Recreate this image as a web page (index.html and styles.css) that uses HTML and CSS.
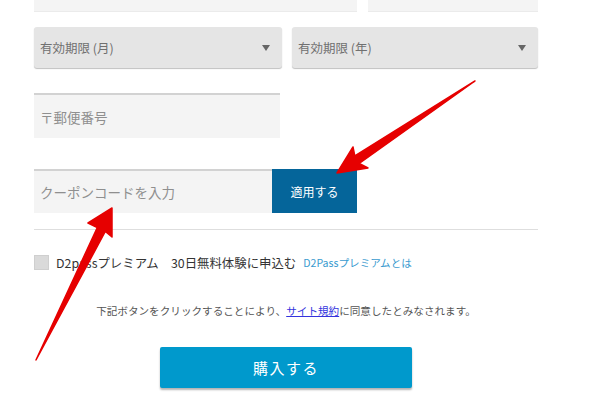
FILE: index.html
```html
<!DOCTYPE html>
<html lang="ja">
<head>
<meta charset="utf-8">
<link rel="stylesheet" href="styles.css">
</head>
<body>
<div class="page">
  <div class="row-top">
    <div class="field"></div>
    <div class="field"></div>
  </div>
  <div class="row-selects">
    <div class="select"><span>有効期限 (月)</span><i class="caret"></i></div>
    <div class="select"><span>有効期限 (年)</span><i class="caret"></i></div>
  </div>
  <div class="postal"><span class="ph">〒郵便番号</span></div>
  <div class="coupon">
    <div class="coupon-input"><span class="ph">クーポンコードを入力</span></div>
    <div class="apply">適用する</div>
  </div>
  <div class="rule"></div>
  <div class="premium">
    <span class="check"></span>
    <span class="premium-label">D2passプレミアム　30日無料体験に申込む</span>
    <a class="premium-link">D2Passプレミアムとは</a>
  </div>
  <p class="notice">下記ボタンをクリックすることにより、<a class="terms">サイト規約</a>に同意したとみなされます。</p>
  <div class="buy-wrap"><div class="buy">購入する</div></div>
</div>
<svg class="arrows" width="600" height="399" viewBox="0 0 600 399">
  <polygon points="475,81 359.2,163.4 368,168 337,173 353,147 354.8,156" />
  <polygon points="36,360 105.3,231.5 112,237 112,208 88,223 97.3,227.5" />
</svg>
</body>
</html>
```
FILE: styles.css
```css
html, body {
  margin: 0;
  padding: 0;
  background: #fff;
  overflow: hidden;
}
body {
  font-family: "Noto Sans CJK JP", "Noto Sans", sans-serif;
  width: 600px;
  height: 399px;
  position: relative;
}
.page {
  padding-left: 34px;
  width: 504px;
}
.row-top {
  display: grid;
  grid-template-columns: 323px 1fr;
  gap: 11px;
  margin-top: -30px;
}
.field {
  height: 42px;
  background: #f4f4f4;
  border-bottom: 1px solid #ebebeb;
  box-sizing: border-box;
}
.row-selects {
  display: grid;
  grid-template-columns: 248px 246px;
  gap: 10px;
  margin-top: 15px;
}
.select {
  height: 41px;
  background: #e5e5e5;
  border-radius: 3px;
  box-shadow: 0 1px 1px rgba(0,0,0,0.25);
  display: flex;
  align-items: center;
  justify-content: space-between;
  padding: 0 12px 0 6px;
  font-size: 12.5px;
  color: #707070;
}
.caret {
  width: 0;
  height: 0;
  border-left: 4px solid transparent;
  border-right: 4px solid transparent;
  border-top: 6px solid #666;
}
.postal {
  margin-top: 25px;
  width: 246px;
  height: 45px;
  background: #f4f4f4;
  border-top: 2px solid #d2d2d2;
  box-sizing: border-box;
  display: flex;
  align-items: center;
  padding-left: 6px;
}
.ph {
  font-size: 13.5px;
  color: #8f8f8f;
}
.coupon {
  margin-top: 31px;
  display: flex;
  height: 44px;
}
.coupon-input {
  width: 238px;
  background: #f4f4f4;
  border-top: 2px solid #d2d2d2;
  box-sizing: border-box;
  display: flex;
  align-items: center;
  padding-left: 6px;
}
.apply {
  width: 85px;
  background: #05659a;
  color: #fff;
  font-size: 12px;
  display: flex;
  align-items: center;
  justify-content: center;
}
.rule {
  margin-top: 16px;
  height: 1px;
  background: #dedede;
}
.premium {
  margin-top: 25px;
  display: flex;
  align-items: center;
  height: 15px;
}
.check {
  width: 15px;
  height: 15px;
  box-sizing: border-box;
  background: #dadada;
  border: 1px solid #cfcfcf;
  margin-right: 7px;
}
.premium-label {
  font-size: 12.4px;
  color: #333;
  margin-right: 7px;
  white-space: nowrap;
}
.premium-link {
  font-size: 10.6px;
  color: #3a9bcf;
  white-space: nowrap;
}
.notice {
  margin: 33px 0 0;
  text-align: center;
  font-size: 10.6px;
  line-height: 16px;
  color: #555;
  white-space: nowrap;
}
.terms {
  color: #3333dd;
  text-decoration: underline;
}
.buy-wrap {
  margin-top: 28px;
  display: flex;
  justify-content: center;
}
.buy {
  width: 252px;
  height: 41px;
  background: #0099cc;
  color: #fff;
  font-size: 15px;
  letter-spacing: 1.5px;
  display: flex;
  align-items: center;
  justify-content: center;
  border-radius: 2px;
  box-shadow: 0 2px 2px rgba(0,0,0,0.3);
}
.arrows {
  position: absolute;
  left: 0;
  top: 0;
  pointer-events: none;
}
.arrows polygon {
  fill: #e60000;
  stroke: #e60000;
  stroke-width: 1.5;
  stroke-linejoin: round;
}
```
